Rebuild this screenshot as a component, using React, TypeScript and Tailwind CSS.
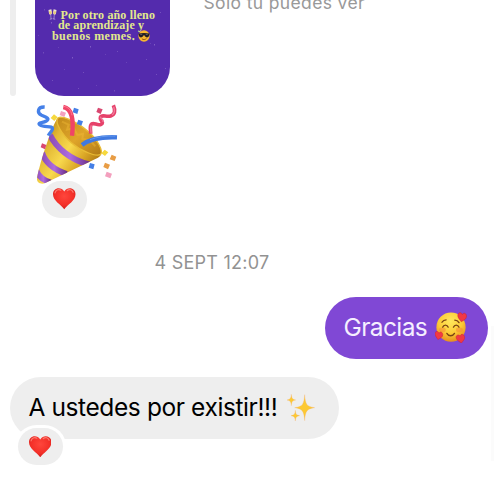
import type { ReactNode } from "react";

function Heart({ id, className }: { id: string; className: string }) {
  return (
    <svg viewBox="0 0 66 62" className={className}>
      <defs>
        <radialGradient id={id} cx="50%" cy="38%" r="65%">
          <stop offset="0" stopColor="#ff463c" />
          <stop offset="0.65" stopColor="#f32f28" />
          <stop offset="1" stopColor="#c91c1c" />
        </radialGradient>
      </defs>
      <path
        d="M33 10C29 3 23 0 17 0 7 0 0 7 0 18c0 19 23 30 33 44C43 48 66 37 66 18 66 7 59 0 49 0 43 0 37 3 33 10Z"
        fill={`url(#${id})`}
      />
      <path d="M6 14C8 6 15 2 23 6M42 7c6-5 14-3 17 5" fill="none" stroke="#ff9a8c" strokeWidth="3.5" strokeLinecap="round" opacity=".7" />
    </svg>
  );
}

function PartyPopper() {
  return (
    <svg viewBox="45 9 255 264" className="block h-[88px] w-[85px]">
      <defs>
        <linearGradient id="cone" x1="0" y1="0.35" x2="0.85" y2="0.95">
          <stop offset="0" stopColor="#c08a18" />
          <stop offset="0.2" stopColor="#e3b935" />
          <stop offset="0.45" stopColor="#f8d94e" />
          <stop offset="0.7" stopColor="#dba726" />
          <stop offset="1" stopColor="#9c650d" />
        </linearGradient>
        <linearGradient id="mouth" x1="0" y1="0" x2="1" y2="1">
          <stop offset="0" stopColor="#c18a1a" />
          <stop offset="0.5" stopColor="#dfa52a" />
          <stop offset="1" stopColor="#b07a16" />
        </linearGradient>
        <linearGradient id="stripe" x1="0" y1="0" x2="1" y2="0">
          <stop offset="0" stopColor="#8c4cb8" />
          <stop offset="0.5" stopColor="#ad6be0" />
          <stop offset="1" stopColor="#6c318c" />
        </linearGradient>
        <clipPath id="coneClip">
          <path d="M113 68C100 85 62 190 51 250c-2 14 14 20 25 14l158-76c16-8 10-25-7-35Z" />
        </clipPath>
      </defs>
      <path d="M113 68C100 85 62 190 51 250c-2 14 14 20 25 14l158-76c16-8 10-25-7-35Z" fill="url(#cone)" />
      <g clipPath="url(#coneClip)" fill="none" stroke="url(#stripe)">
        <path d="M90 120c18 37 62 76 118 88" strokeWidth="18" />
        <path d="M66 173c10 30 38 52 74 64" strokeWidth="18" />
        <path d="M48 225c8 20 20 30 44 38" strokeWidth="18" />
      </g>
      <path d="M113 70c8-12 54 8 90 38 30 25 47 60 39 70-10 9-56-8-88-35-30-26-49-60-41-73Z" fill="url(#mouth)" stroke="#e9bc35" strokeWidth="4" />
      <path d="m126 80 20 9-5 15 21-4 10 20 17-3-2 15 22 3 17 19" fill="none" stroke="#f3bc36" strokeWidth="6" opacity=".4" />
      <path d="M130 36c26 5 32 34 26 86" fill="none" stroke="#f04467" strokeWidth="13" />
      <path d="M131 34c14 2 22 11 25 27" fill="none" stroke="#ff7890" strokeWidth="3" />
      <path d="M186 150c25-20 58-25 105-23" fill="none" stroke="#4079e0" strokeWidth="13" />
      <path d="M210 134c21-8 46-12 76-11" fill="none" stroke="#6298ee" strokeWidth="3" />
      <path d="M74 36c-22-1-24 18-9 25 14 6 26 10 14 17-11 7-29 4-19 12 12 9 41 0 37 13-2 8-8 9-12 19" fill="none" stroke="#4580e8" strokeWidth="10" strokeLinejoin="round" />
      <path d="M280 31c7 16 5 28-8 32-13 4-27-6-31 4-4 10 14 14 2 21-11 6-24-9-30 1-4 6-1 16-1 27" fill="none" stroke="#e6416a" strokeWidth="11" strokeLinejoin="round" />
      <path d="M281 35c4 12 3 20-5 25m-34 5c-2 8 12 9 6 16M214 91c-4 6-1 13-1 22" fill="none" stroke="#f07c9c" strokeWidth="4" />
      <path d="m102 58 11 9-10 11-11-9Zm152 106 11 8-10 11-11-8Z" fill="#f6d93e" />
      <path d="m162 38 14 5-4 14-14-5Zm13 36 14 5-5 13-14-5Zm35 130 14 4-4 15-14-5Z" fill="#447fe6" />
      <path d="m234 38 14 5-6 14-13-6ZM66 145l13 5-4 13-13-6Z" fill="#d94871" />
      <path d="m123 48 15 5-5 13-14-6Zm137 182 16 6-5 14-16-6Z" fill="#f3a0be" />
      <path d="m275 179 14 6-5 13-15-5Zm-20 24 15 6-6 14-14-7Z" fill="#e89d45" />
    </svg>
  );
}

const TINY_HEART = "M0-3C-2-8-9-7-9-1-9 5-3 8 0 12 4 8 10 5 9-1 8-7 2-8 0-3Z";

function LovingFace() {
  return (
    <svg viewBox="0 0 92 88" className="block h-[31px] w-[32px] shrink-0">
      <defs>
        <radialGradient id="face" cx="48%" cy="30%" r="68%">
          <stop offset="0" stopColor="#ffe85c" />
          <stop offset="0.6" stopColor="#fccb37" />
          <stop offset="1" stopColor="#e8921e" />
        </radialGradient>
      </defs>
      <circle cx="46" cy="43" r="42" fill="url(#face)" />
      <ellipse cx="21" cy="51" rx="10" ry="7" fill="#f58a39" opacity=".55" />
      <ellipse cx="70" cy="51" rx="10" ry="7" fill="#f58a39" opacity=".55" />
      <path d="M22 43c3-8 13-8 16 0M53 43c3-8 13-8 16 0M34 61c5 9 17 9 22 0M20 29c3-5 7-7 12-7M57 23c5 0 9 2 12 7" fill="none" stroke="#794314" strokeWidth="3.8" strokeLinecap="round" />
      <g fill="#f03844" stroke="#ce2332" strokeWidth="1">
        <path d={TINY_HEART} transform="translate(78 11) rotate(8) scale(1.4)" />
        <path d={TINY_HEART} transform="translate(11 64) rotate(10) scale(1.25)" />
        <path d={TINY_HEART} transform="translate(73 73) rotate(-10) scale(1.35)" />
      </g>
    </svg>
  );
}

function Sparkles() {
  return (
    <svg viewBox="0 0 84 82" className="block h-[28px] w-[28px] shrink-0">
      <g fill="#fcc933" stroke="#f6ad62" strokeWidth="0.8">
        <path d="M53 1c2 28 6 36 30 39-24 3-28 11-30 39-2-28-6-36-30-39 24-3 28-11 30-39Z" />
        <path d="M13 0c1 12 3 15 13 17-10 2-12 5-13 17C12 22 10 19 0 17 10 15 12 12 13 0Zm12 48c1 12 3 14 13 16-10 2-12 4-13 16-1-12-3-14-13-16 10-2 12-4 13-16Z" />
      </g>
    </svg>
  );
}

function Glasses() {
  return (
    <svg viewBox="0 0 27 34" className="h-[11px] w-[9px] shrink-0">
      <path d="m1 3 9-2 2 11-3 6-6-2Zm16-2 9 2-2 13-6 2-3-6Z" fill="#efe3cf" />
      <path d="m8 17 1 14m-4 1 7-2m7-13-1 14m-4-1 8 2" stroke="#c5b8dc" strokeWidth="2" fill="none" />
      <path d="m2 8 9-1v5l-3 5-4-2Zm14-1 9 1-2 7-4 2-3-5Z" fill="#e5c779" />
    </svg>
  );
}

function CoolFace() {
  return (
    <svg viewBox="0 0 34 34" className="h-[12px] w-[12px] shrink-0">
      <circle cx="17" cy="17" r="16" fill="#f7b631" />
      <path d="M1 10c10-2 22-2 32 0l-2 8c-3 5-10 4-13-3h-2c-3 7-10 8-13 3Z" fill="#211d26" />
      <path d="m6 12 6 1M22 13l6-1" stroke="#77717a" strokeWidth="2" />
      <path d="M11 25c4 3 9 3 13-1" fill="none" stroke="#8f4a16" strokeWidth="2.5" />
    </svg>
  );
}

const SPECKS = [
  [16, 22], [29, 69], [48, 72], [8, 52], [82, 51], [115, 43], [119, 44], [98, 40],
  [121, 74], [104, 79], [17, 80], [61, 85], [37, 57], [91, 62], [130, 68], [9, 9],
  [125, 12], [70, 54], [55, 46], [23, 47], [111, 59], [79, 90], [43, 88], [3, 35],
];

function StoryCard() {
  return (
    <div className="relative h-24 w-[135px] overflow-hidden rounded-b-[29px] bg-[#542bad]">
      <svg viewBox="0 0 135 96" className="absolute inset-0">
        {SPECKS.map(([x, y], i) => (
          <path key={i} d={`M${x} ${y}h1v${i % 3 ? 0.7 : 1.4}h-1Z`} fill="#b397df" opacity={i % 2 ? 0.3 : 0.45} />
        ))}
      </svg>
      <div className="relative flex flex-col pt-[9.5px] font-['Liberation_Serif',serif] text-[12px] leading-[10.5px] font-bold whitespace-nowrap text-[#e2e98c]">
        <div className="flex h-[10.5px] items-center gap-[3.5px] pl-[13.5px]">
          <Glasses />
          <span className="tracking-[0.15px]">Por otro año lleno</span>
        </div>
        <span className="pl-[23.5px] tracking-[0.1px]">de aprendizaje y</span>
        <div className="flex h-[10.5px] items-center gap-[2.5px] pl-[17.5px]">
          <span className="tracking-[0.45px]">buenos memes.</span>
          <CoolFace />
        </div>
      </div>
    </div>
  );
}

function Reaction({ id, className }: { id: string; className: string }) {
  return (
    <div className={`flex h-[37px] w-[45px] items-center justify-center rounded-[19px] bg-[#eeeeee] ${className}`}>
      <Heart id={id} className="h-[21.5px] w-[22.5px]" />
    </div>
  );
}

function Bubble({ className, children }: { className: string; children: ReactNode }) {
  return (
    <div className={`flex h-[61.5px] items-center rounded-[31px] pl-[19px] text-[24.5px] leading-[30px] whitespace-nowrap ${className}`}>
      {children}
    </div>
  );
}

export default function App() {
  return (
    <main className="relative flex h-[492px] w-[500px] flex-col overflow-hidden bg-white font-[Inter,sans-serif]">
      <div className="flex h-24 pl-[10px]">
        <div className="h-24 w-[6px] rounded-b-[3px] bg-[#eeeeee]" />
        <div className="ml-[18.5px]">
          <StoryCard />
        </div>
        <p className="-mt-[8px] ml-[34px] text-[17.5px] leading-[22px] tracking-[0.36px] whitespace-nowrap text-[#999999]">
          Solo tú puedes ver
        </p>
      </div>
      <div className="relative mt-[2px] ml-[35px] h-[88px] w-[85px]">
        <PartyPopper />
        <Reaction id="heart-first" className="absolute top-[82.5px] left-[7px]" />
      </div>
      <div className="mt-[66px] h-[22px] w-[424px] text-center text-[18px] leading-[22px] tracking-[0.25px] whitespace-nowrap text-[#929292]">
        4 SEPT 12:07
      </div>
      <Bubble className="mt-[23px] ml-[325px] w-[163px] bg-[#8048d5] text-[#f5efff]">
        <span className="-ml-[0.5px] w-[91.5px] pb-px tracking-[-0.6px]">Gracias</span>
        <LovingFace />
      </Bubble>
      <div className="relative mt-[18.5px] ml-[10px] w-[329px]">
        <Bubble className="bg-[#eeeeee] text-black">
          <span className="-ml-[0.5px] w-[258.5px] pb-px tracking-[-0.4px]">A ustedes por existir!!!</span>
          <Sparkles />
        </Bubble>
        <Reaction id="heart-second" className="absolute top-[51px] left-[7.5px] ring-[3px] ring-white" />
      </div>
      <div className="absolute top-[326px] left-[491px] h-[135px] w-[3px] bg-[#fbfbfb]" />
    </main>
  );
}
